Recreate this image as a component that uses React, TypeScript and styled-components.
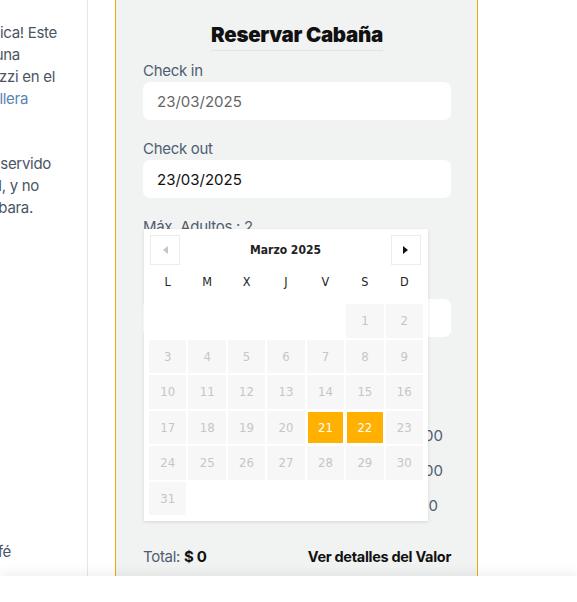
import styled, { createGlobalStyle } from "styled-components";

const GlobalStyle = createGlobalStyle`
  * {
    box-sizing: border-box;
  }

  html,
  body {
    margin: 0;
    padding: 0;
    background: #ffffff;
  }

  body {
    font-family: Inter, "Noto Sans", sans-serif;
  }
`;

const StyledPage = styled.div`
  display: flex;
  min-height: 100vh;
`;

const StyledSide = styled.aside`
  width: 88px;
  flex-shrink: 0;
  padding-top: 22px;
  border-right: 1px solid #e7e7e7;
  overflow: hidden;

  font-size: 15px;
  line-height: 22px;
  letter-spacing: -0.3px;
  color: #4b5563;
`;

const StyledParagraph = styled.p<{ $top: number }>`
  margin: ${(p) => p.$top}px 0 0;
`;

const StyledLine = styled.span<{ $end: number; $link?: boolean }>`
  display: flex;
  justify-content: flex-end;
  width: ${(p) => p.$end}px;
  white-space: nowrap;
  color: ${(p) => (p.$link ? "#5b83b5" : "inherit")};
`;

const StyledPanel = styled.section`
  position: relative;
  width: 363px;
  flex-shrink: 0;
  margin-left: 27px;
  padding: 22px 26px 0 27px;

  background-color: #f1f3f2;
  border-left: 1px solid #f2a900;
  border-right: 1px solid #f2a900;
`;

const StyledTitleWrapper = styled.div`
  text-align: center;
  margin-bottom: 9px;
`;

const StyledTitle = styled.h2`
  display: inline-block;
  margin: 0;
  padding-bottom: 2px;
  border-bottom: 1px solid #e2e4e3;

  font-size: 20.5px;
  line-height: 26px;
  font-weight: 900;
  letter-spacing: -0.3px;
  color: #111111;
`;

const StyledField = styled.div`
  margin-bottom: 18px;
`;

const StyledLabel = styled.label`
  display: block;
  padding-top: 1px;
  margin-bottom: 1px;

  font-size: 15px;
  line-height: 20px;
  letter-spacing: -0.3px;
  color: #4f5d70;
`;

const StyledInput = styled.input<{ $muted?: boolean; $top?: number }>`
  display: block;
  width: 100%;
  height: 38px;
  margin-top: ${(p) => p.$top ?? 0}px;
  padding: 0 14px;

  border: none;
  border-radius: 7px;
  outline: none;
  background: #ffffff;

  font-family: inherit;
  font-size: 15px;
  color: ${(p) => (p.$muted ? "#666666" : "#111111")};
`;

const StyledPriceList = styled.div`
  margin-top: 81px;
`;

const StyledPriceRow = styled.div<{ $inset: number }>`
  display: flex;
  justify-content: space-between;
  height: 35px;
  padding: 0 ${(p) => p.$inset}px 0 6px;

  font-size: 15px;
  line-height: 35px;
  color: #4f5d70;
`;

const StyledTotalRow = styled.div`
  display: flex;
  justify-content: space-between;
  align-items: center;
  margin-top: 22px;
  height: 22px;
`;

const StyledTotal = styled.span`
  font-size: 15px;
  letter-spacing: -0.3px;
  color: #4f5d70;

  strong {
    font-weight: 700;
    color: #111111;
  }
`;

const StyledDetailsLink = styled.a`
  font-size: 14.5px;
  font-weight: 700;
  letter-spacing: -0.3px;
  color: #111111;
  text-decoration: none;
`;

const StyledCalendar = styled.div`
  position: absolute;
  top: 229px;
  left: 28px;
  width: 284px;
  padding: 6px 5px;

  background: #ffffff;
  box-shadow: 0 1px 3px rgba(0, 0, 0, 0.12);

  font-family: "DejaVu Sans Condensed", "DejaVu Sans", sans-serif;
`;

const StyledCalendarHeader = styled.div`
  display: flex;
  align-items: center;
  justify-content: space-between;
  padding: 0 2px 0 1px;
`;

const StyledMonth = styled.span`
  font-size: 12px;
  font-weight: 700;
  color: #222222;
`;

const StyledNavButton = styled.button<{ $dir: "prev" | "next"; $disabled?: boolean }>`
  display: flex;
  align-items: center;
  justify-content: center;
  width: 30px;
  height: 30px;
  padding: 0;

  border: 1px solid #ececec;
  background: #ffffff;

  &::before {
    content: "";
    width: 0;
    height: 0;
    border-top: 4px solid transparent;
    border-bottom: 4px solid transparent;
    ${(p) =>
      p.$dir === "prev"
        ? `border-right: 5px solid ${p.$disabled ? "#c6c6c6" : "#111"};`
        : `border-left: 5px solid ${p.$disabled ? "#c6c6c6" : "#111"};`}
  }
`;

const StyledWeekdays = styled.div`
  display: grid;
  grid-template-columns: repeat(7, 1fr);
  column-gap: 2px;
  height: 22px;
  margin: 6px 0 11px;

  font-size: 12.5px;
  line-height: 22px;
  text-align: center;
  color: #222222;
`;

const StyledDays = styled.div`
  display: grid;
  grid-template-columns: repeat(7, 1fr);
  grid-auto-rows: 33.5px;
  gap: 2px;
`;

const StyledDay = styled.span<{ $selected?: boolean; $empty?: boolean }>`
  display: flex;
  align-items: center;
  justify-content: center;

  background: ${(p) => (p.$empty ? "transparent" : p.$selected ? "#ffb000" : "#f7f7f7")};
  border: 1px solid ${(p) => (p.$selected ? "#ffffff" : "transparent")};

  font-size: 13px;
  color: ${(p) => (p.$selected ? "#ffffff" : "#c6c6c6")};
`;

const StyledFooter = styled.div`
  position: fixed;
  left: 0;
  right: 0;
  bottom: 0;
  height: 26px;

  background: #ffffff;
  box-shadow: 0 -5px 10px rgba(0, 0, 0, 0.05);
`;

const sideParagraphs = [
  {
    top: 0,
    lines: [
      { text: "¡Una experiencia única! Este", end: 57 },
      { text: "refugio te ofrece una", end: 20 },
      { text: "noches de jacuzzi en el", end: 55 },
      { text: "de la cordillera", end: 28, link: true },
    ],
  },
  {
    top: 43,
    lines: [
      { text: "con desayuno servido", end: 51 },
      { text: "tranquilidad, y no", end: 39 },
      { text: "que nunca acabara.", end: 33 },
    ],
  },
  {
    top: 322,
    lines: [{ text: "buen café", end: 11 }],
  },
];

const weekdays = ["L", "M", "X", "J", "V", "S", "D"];
const leadingBlanks = 5;
const selectedDays = [21, 22];
const days = Array.from({ length: 31 }, (_, i) => i + 1);

const prices = [
  { label: "Noches x 2", value: "$ 150.000", inset: 8 },
  { label: "Adultos x 2", value: "$ 300.000", inset: 8 },
  { label: "Descuento", value: "$ 0", inset: 13 },
];

const App = (): JSX.Element => {
  return (
    <>
      <GlobalStyle />
      <StyledPage>
        <StyledSide>
          {sideParagraphs.map((paragraph, index) => (
            <StyledParagraph key={index} $top={paragraph.top}>
              {paragraph.lines.map((line) => (
                <StyledLine key={line.text} $end={line.end} $link={line.link}>
                  {line.text}
                </StyledLine>
              ))}
            </StyledParagraph>
          ))}
        </StyledSide>

        <StyledPanel>
          <StyledTitleWrapper>
            <StyledTitle>Reservar Cabaña</StyledTitle>
          </StyledTitleWrapper>

          <StyledField>
            <StyledLabel>Check in</StyledLabel>
            <StyledInput $muted readOnly value="23/03/2025" />
          </StyledField>

          <StyledField>
            <StyledLabel>Check out</StyledLabel>
            <StyledInput readOnly value="23/03/2025" />
          </StyledField>

          <StyledField>
            <StyledLabel>Máx. Adultos : 2</StyledLabel>
            <StyledInput $top={62} readOnly value="2" />
          </StyledField>

          <StyledPriceList>
            {prices.map((price) => (
              <StyledPriceRow key={price.label} $inset={price.inset}>
                <span>{price.label}</span>
                <span>{price.value}</span>
              </StyledPriceRow>
            ))}
          </StyledPriceList>

          <StyledTotalRow>
            <StyledTotal>
              Total: <strong>$ 0</strong>
            </StyledTotal>
            <StyledDetailsLink href="#">Ver detalles del Valor</StyledDetailsLink>
          </StyledTotalRow>

          <StyledCalendar>
            <StyledCalendarHeader>
              <StyledNavButton $dir="prev" $disabled aria-label="Mes anterior" />
              <StyledMonth>Marzo 2025</StyledMonth>
              <StyledNavButton $dir="next" aria-label="Mes siguiente" />
            </StyledCalendarHeader>

            <StyledWeekdays>
              {weekdays.map((day) => (
                <span key={day}>{day}</span>
              ))}
            </StyledWeekdays>

            <StyledDays>
              {Array.from({ length: leadingBlanks }, (_, i) => (
                <StyledDay key={`blank-${i}`} $empty />
              ))}
              {days.map((day) => (
                <StyledDay key={day} $selected={selectedDays.includes(day)}>
                  {day}
                </StyledDay>
              ))}
            </StyledDays>
          </StyledCalendar>
        </StyledPanel>
      </StyledPage>
      <StyledFooter />
    </>
  );
};

export default App;
